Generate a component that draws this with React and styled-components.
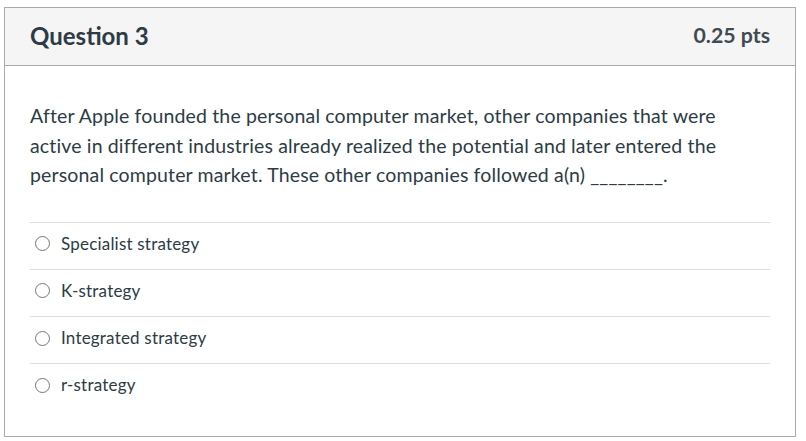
import React from "react";
import styled, { createGlobalStyle } from "styled-components";

const GlobalStyle = createGlobalStyle`
  body {
    margin: 0;
    background: #ffffff;
    font-family: Lato, "Open Sans", sans-serif;
    color: #2d3b45;
  }
`;

const options = [
  "Specialist strategy",
  "K-strategy",
  "Integrated strategy",
  "r-strategy",
];

const App = () => {
  return (
    <>
      <GlobalStyle />
      <Card>
        <Header>
          <Title>Question 3</Title>
          <Points>0.25 pts</Points>
        </Header>

        <Body>
          <QuestionText>
            After Apple founded the personal computer market, other companies
            that were active in different industries already realized the
            potential and later entered the personal computer market. These
            other companies followed a(n) ________.
          </QuestionText>

          <Answers>
            {options.map((label) => (
              <Answer key={label}>
                <Radio type="radio" name="q3" />
                <AnswerLabel>{label}</AnswerLabel>
              </Answer>
            ))}
          </Answers>
        </Body>
      </Card>
    </>
  );
};

const Card = styled.div`
  box-sizing: border-box;
  width: 792px;
  margin: 7px 0 0 4px;
  border: 1px solid #aaaaaa;
  background: #ffffff;
`;

const Header = styled.div`
  box-sizing: border-box;
  height: 58px;
  padding: 0 25px 3px 25px;
  display: flex;
  align-items: center;
  justify-content: space-between;
  background: #f5f5f5;
  border-bottom: 1px solid #aaaaaa;
`;

const Title = styled.h2`
  margin: 0;
  font-size: 24px;
  font-weight: 700;
  color: #2d3b45;
`;

const Points = styled.div`
  font-size: 21.3px;
  font-weight: 700;
  color: #3f4a52;
`;

const Body = styled.div`
  padding: 35px 25px 25px;
`;

const QuestionText = styled.p`
  margin: 0 0 32px;
  font-size: 19.5px;
  letter-spacing: 0.15px;
  line-height: 29.5px;
  color: #2d3b45;
`;

const Answers = styled.div`
  display: flex;
  flex-direction: column;
`;

const Answer = styled.label`
  display: flex;
  align-items: center;
  gap: 11px;
  padding: 9px 0 13.3px 6px;
  border-top: 1px solid #dddddd;
  font-size: 17px;
  letter-spacing: 0.2px;
  line-height: 24px;
`;

const Radio = styled.input`
  appearance: none;
  box-sizing: border-box;
  width: 15px;
  height: 15px;
  margin: 0 0 0 -1px;
  border: 1.3px solid #757575;
  border-radius: 50%;
  background: #ffffff;
`;

const AnswerLabel = styled.span`
  color: #2d3b45;
`;

export default App;
